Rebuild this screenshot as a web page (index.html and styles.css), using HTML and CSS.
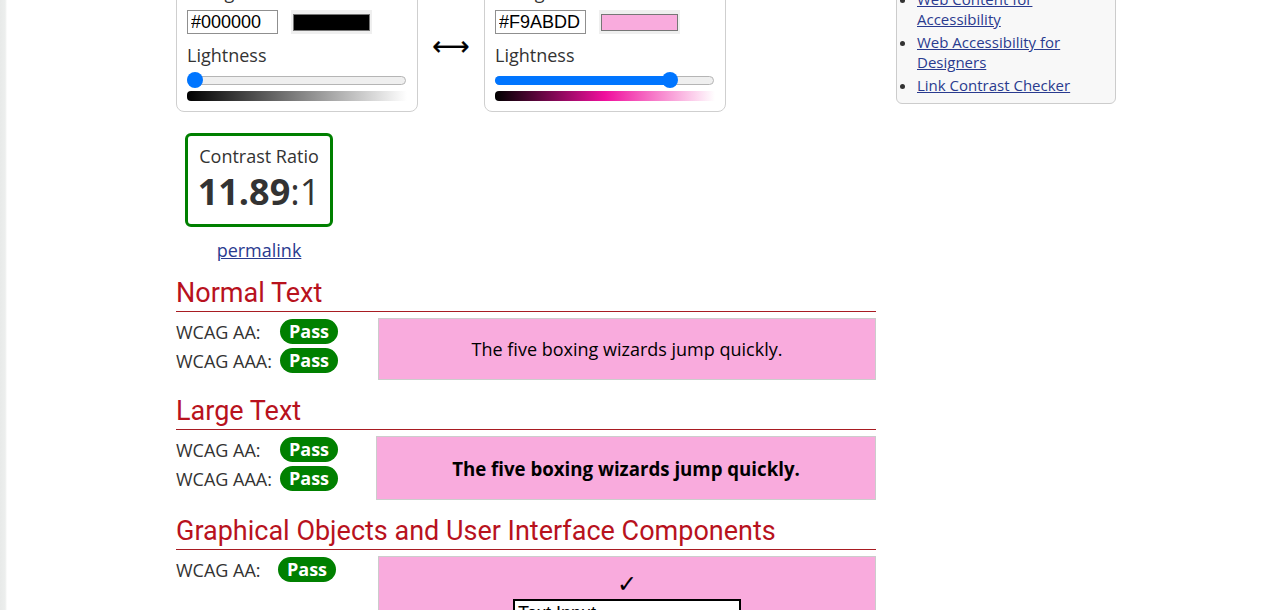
FILE: index.html
```html
<!DOCTYPE html>
<html lang="en">
<head>
<meta charset="utf-8">
<title>Contrast Checker</title>
<link rel="stylesheet" href="styles.css">
</head>
<body>
<div class="page">
  <main class="main">
    <h1 class="title">Contrast Checker</h1>
    <div class="pickers">
      <div class="card">
        <div class="card-title">Foreground Color</div>
        <div class="hex-row">
          <input class="hex" type="text" value="#000000">
          <span class="swatch"><span class="swatch-fill fill-black"></span></span>
        </div>
        <div class="light-label">Lightness</div>
        <div class="slider">
          <div class="slider-fill" style="width:0px"></div>
          <div class="thumb" style="left:0px"></div>
        </div>
        <div class="grad grad-black"></div>
      </div>
      <div class="swap">&#x27F7;</div>
      <div class="card">
        <div class="card-title">Background Color</div>
        <div class="hex-row">
          <input class="hex" type="text" value="#F9ABDD">
          <span class="swatch"><span class="swatch-fill fill-pink"></span></span>
        </div>
        <div class="light-label">Lightness</div>
        <div class="slider">
          <div class="slider-fill" style="width:175px"></div>
          <div class="thumb" style="left:167px"></div>
        </div>
        <div class="grad grad-pink"></div>
      </div>
    </div>

    <div class="ratio-wrap">
      <div class="ratio">
        <div class="ratio-label">Contrast Ratio</div>
        <div class="ratio-value"><b>11.89</b>:1</div>
      </div>
      <a class="permalink" href="#">permalink</a>
    </div>

    <section class="result">
      <h2 class="result-title">Normal Text</h2>
      <div class="result-row">
        <div class="checks checks-normal">
          <div class="check"><span class="level">WCAG AA:</span><span class="pass">Pass</span></div>
          <div class="check"><span class="level">WCAG AAA:</span><span class="pass">Pass</span></div>
        </div>
        <div class="sample sample-normal">The five boxing wizards jump quickly.</div>
      </div>
    </section>

    <section class="result">
      <h2 class="result-title">Large Text</h2>
      <div class="result-row">
        <div class="checks checks-large">
          <div class="check"><span class="level">WCAG AA:</span><span class="pass">Pass</span></div>
          <div class="check"><span class="level">WCAG AAA:</span><span class="pass">Pass</span></div>
        </div>
        <div class="sample sample-large">The five boxing wizards jump quickly.</div>
      </div>
    </section>

    <section class="result">
      <h2 class="result-title">Graphical Objects and User Interface Components</h2>
      <div class="result-row">
        <div class="checks checks-graphic">
          <div class="check"><span class="level level-g">WCAG AA:</span><span class="pass">Pass</span></div>
        </div>
        <div class="sample sample-graphic">
          <div class="checkmark">&#x2713;</div>
          <div class="text-input">Text Input</div>
        </div>
      </div>
    </section>
  </main>

  <aside class="sidebar">
    <h3 class="side-title">Resources</h3>
    <ul class="side-list">
      <li><a href="#">Contrast and Color</a></li>
      <li><a href="#">Color Blindness</a></li>
      <li><a href="#">Web Content for Accessibility</a></li>
      <li><a href="#">Web Accessibility for Designers</a></li>
      <li><a href="#">Link Contrast Checker</a></li>
    </ul>
  </aside>
</div>
</body>
</html>
```

FILE: styles.css
```css
html {
  background: linear-gradient(to right, #e8eae9 0, #eceeed 5px, #f4f5f4 6px, #ffffff 7px);
}
body {
  margin: 0;
  font-family: "Open Sans", "Liberation Sans", sans-serif;
  color: #333;
}
a { color: #2a3b8f; }

.page {
  display: flex;
  align-items: flex-start;
  gap: 20px;
  margin: -100px 0 0 176px;
}
.main { width: 700px; }

.title {
  margin: 0 0 29px;
  font-size: 32px;
  line-height: 40px;
}

.pickers {
  display: flex;
  align-items: flex-start;
}
.card {
  width: 242px;
  box-sizing: border-box;
  border: 1px solid #cfcfcf;
  border-radius: 8px;
  padding: 10px;
}
.card-title {
  font-size: 18px;
  line-height: 24px;
  margin-bottom: 6px;
}
.hex-row {
  display: flex;
  gap: 13px;
  height: 24px;
}
.hex {
  width: 91px;
  height: 24px;
  box-sizing: border-box;
  border: 1px solid #8f8f8f;
  padding: 0 3px;
  margin: 0;
  font-family: "Liberation Sans", Arial, sans-serif;
  font-size: 18px;
  color: #000;
  background: #fff;
}
.swatch {
  width: 81px;
  height: 24px;
  box-sizing: border-box;
  background: #efefef;
  padding: 4px 2px 3px;
  display: flex;
}
.swatch-fill {
  flex: 1;
  border: 1px solid #767676;
}
.fill-black { background: #000; }
.fill-pink { background: #f9abdd; }

.light-label {
  font-size: 18px;
  line-height: 24px;
  margin-top: 9px;
}
.slider {
  position: relative;
  margin-top: 9px;
  margin-right: 1px;
  height: 9px;
  box-sizing: border-box;
  border: 1px solid #b5b5b5;
  border-radius: 5px;
  background: #efefef;
}
.slider-fill {
  height: 9px;
  margin: -1px 0 0 -1px;
  background: #0075ff;
  border-radius: 5px 0 0 5px;
}
.thumb {
  position: absolute;
  top: -5px;
  width: 16px;
  height: 16px;
  margin-left: -1px;
  border-radius: 50%;
  background: #0075ff;
}
.grad {
  margin-top: 6px;
  height: 10px;
  border-radius: 4px 0 0 4px;
}
.grad-black { background: linear-gradient(to right, #000, #fff); }
.grad-pink { background: linear-gradient(to right, #000, #f00f9d 50%, #fff); }

.swap {
  width: 66px;
  text-align: center;
  font-family: "DejaVu Sans", sans-serif;
  font-size: 26px;
  line-height: 30px;
  color: #000;
  margin-top: 62px;
  -webkit-text-stroke: 0.3px #000;
}

.ratio-wrap {
  width: 148px;
  margin: 21px 0 0 9px;
  text-align: center;
}
.ratio {
  border: 3px solid #008000;
  border-radius: 6px;
  padding: 8px 0 10px;
}
.ratio-label {
  font-size: 18px;
  line-height: 24px;
}
.ratio-value {
  font-size: 36px;
  line-height: 46px;
  padding-top: 1px;
  margin-bottom: -1px;
}
.ratio-value b { font-weight: 700; }
.permalink {
  display: inline-block;
  margin-top: 11px;
  font-size: 18px;
  line-height: 24px;
}

.result-title {
  margin: 14px 0 0;
  padding-bottom: 1px;
  border-bottom: 1px solid #a81c22;
  font-family: Roboto, "Liberation Sans", sans-serif;
  font-weight: 400;
  font-size: 27px;
  line-height: 34px;
  color: #b8121d;
}
.result-row {
  display: flex;
  align-items: flex-start;
  margin-top: 6px;
}
.checks {
  display: flex;
  flex-direction: column;
  gap: 4px;
  padding-top: 1px;
}
.checks-normal { width: 202px; }
.checks-large { width: 200px; }
.checks-graphic { width: 202px; }
.check {
  display: flex;
  align-items: center;
  height: 25px;
}
.level {
  width: 104px;
  font-size: 18px;
  line-height: 24px;
}
.level-g { width: 102px; }
.pass {
  width: 58px;
  height: 25px;
  border-radius: 13px;
  background: #008000;
  color: #fff;
  font-weight: 700;
  font-size: 18px;
  line-height: 25px;
  text-align: center;
}
.sample {
  flex: 1;
  box-sizing: border-box;
  border: 1px solid #cccccc;
  background: #f9abdd;
  color: #000;
  display: flex;
  align-items: center;
  justify-content: center;
}
.sample-normal {
  height: 62px;
  font-size: 18px;
}
.sample-large {
  height: 64px;
  font-size: 18.66px;
  font-weight: 700;
}
.sample-graphic {
  height: 80px;
  flex-direction: column;
  justify-content: flex-start;
  padding-top: 13px;
}
.checkmark {
  font-family: "DejaVu Sans", sans-serif;
  font-weight: 700;
  font-size: 24px;
  line-height: 28px;
  margin-bottom: 1px;
}
.text-input {
  width: 228px;
  box-sizing: border-box;
  border: 2px solid #000;
  padding: 0 3px;
  font-family: "Liberation Sans", Arial, sans-serif;
  font-size: 18px;
  line-height: 24px;
  background: #fff;
}

.sidebar {
  width: 220px;
  box-sizing: border-box;
  border: 1px solid #cccccc;
  border-radius: 6px;
  background: #f8f8f8;
  padding: 8px 8px 8px;
}
.side-title {
  margin: 0 0 10px;
  font-size: 18px;
  line-height: 24px;
}
.side-list {
  margin: 0;
  padding-left: 12px;
  font-size: 15px;
  line-height: 20px;
}
.side-list li + li { margin-top: 3px; }
```
